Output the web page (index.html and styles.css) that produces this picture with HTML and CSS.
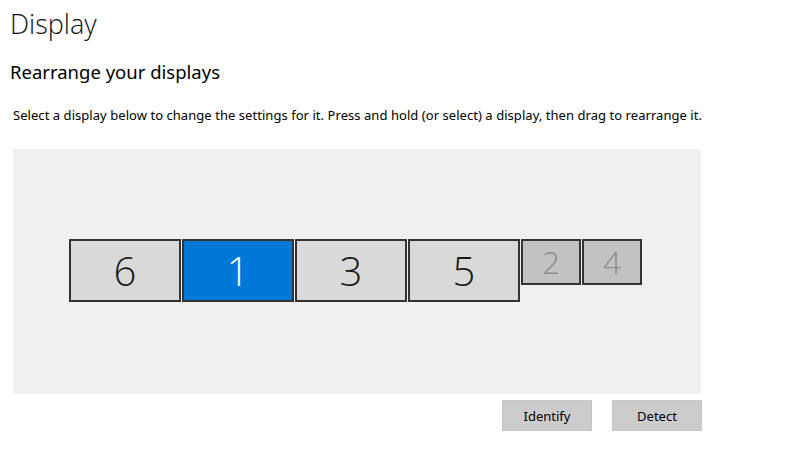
FILE: index.html
```html
<!DOCTYPE html>
<html>
<head>
<meta charset="utf-8">
<link rel="stylesheet" href="styles.css">
</head>
<body>
<div class="page">
  <h1 class="title">Display</h1>
  <h2 class="subtitle">Rearrange your displays</h2>
  <p class="desc">Select a display below to change the settings for it. Press and hold (or select) a display, then drag to rearrange it.</p>
  <div class="canvas">
    <div class="monitors">
      <div class="mon large">6</div>
      <div class="mon large selected">1</div>
      <div class="mon large">3</div>
      <div class="mon large">5</div>
      <div class="mon small">2</div>
      <div class="mon small">4</div>
    </div>
  </div>
  <div class="actions">
    <button class="btn">Identify</button>
    <button class="btn">Detect</button>
  </div>
</div>
</body>
</html>
```
FILE: styles.css
```css
html, body {
  margin: 0;
  padding: 0;
  background: #ffffff;
}
body {
  font-family: "Noto Sans", "Open Sans", "Liberation Sans", sans-serif;
  color: #000;
}
.page {
  width: 800px;
  height: 467px;
  overflow: hidden;
}
.title {
  margin: 0;
  padding: 5px 0 0 10px;
  font-family: "Open Sans", "Noto Sans", sans-serif;
  font-size: 27px;
  font-weight: 350;
  line-height: 38px;
  letter-spacing: 0;
  color: #111;
}
.subtitle {
  margin: 0;
  padding: 16px 0 0 10px;
  font-size: 18.5px;
  font-weight: 400;
  line-height: 26px;
}
.desc {
  margin: 0;
  padding: 21px 0 0 13px;
  font-size: 13px;
  line-height: 18px;
  letter-spacing: 0.05px;
}
.canvas {
  margin: 25px 0 0 13px;
  width: 688px;
  height: 245px;
  background: #f0f0f0;
  box-sizing: border-box;
  padding: 90px 0 0 56px;
}
.monitors {
  display: flex;
  align-items: flex-start;
  gap: 1px;
}
.mon {
  box-sizing: border-box;
  border: 2px solid #333333;
  display: flex;
  align-items: center;
  justify-content: center;
  font-family: "Open Sans", "Noto Sans", sans-serif;
  font-weight: 300;
  color: #1a1a1a;
}
.large {
  width: 112px;
  height: 63px;
  background: #d9d9d9;
  font-size: 40px;
}
.small {
  width: 60px;
  height: 46px;
  background: #c2c2c2;
  color: #8c8c8c;
  font-size: 31px;
}
.selected {
  background: #0078d7;
  color: #ffffff;
}
.actions {
  display: flex;
  justify-content: flex-end;
  gap: 20px;
  width: 702px;
  margin-top: 6px;
}
.btn {
  width: 90px;
  height: 31px;
  background: #cccccc;
  border: 1px solid #c4c4c4;
  font-family: "Noto Sans", "Open Sans", sans-serif;
  font-size: 13px;
  color: #000;
  padding: 0;
}
```
